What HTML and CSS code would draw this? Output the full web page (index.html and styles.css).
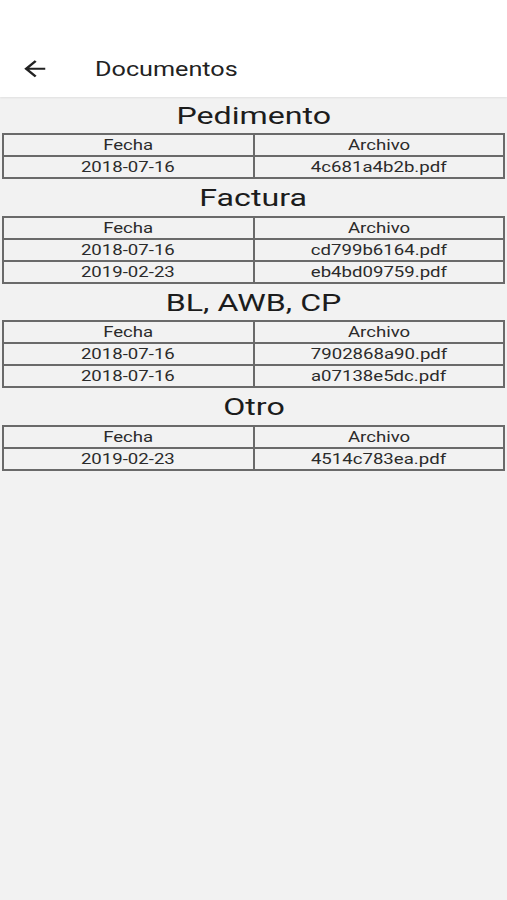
FILE: index.html
```html
<!DOCTYPE html>
<html lang="es">
<head>
  <meta charset="UTF-8">
  <meta name="viewport" content="width=device-width, initial-scale=1.0">
  <title>Documentos</title>
  <link rel="stylesheet" href="styles.css">
</head>
<body>

<header class="appbar">
  <div class="toolbar">
    <svg class="back" viewBox="0 0 24 24" preserveAspectRatio="none" aria-hidden="true">
      <path d="M20 11H7.83l5.59-5.59L12 4l-8 8 8 8 1.41-1.41L7.83 13H20v-2z"/>
    </svg>
    <span class="toolbar-title wide">Documentos</span>
  </div>
</header>

<main class="docs">

  <section class="doc-group">
    <h2 class="group-title"><span class="wide">Pedimento</span></h2>
    <div class="doc-table">
      <div class="cell"><span class="wide">Fecha</span></div>
      <div class="cell"><span class="wide">Archivo</span></div>
      <div class="cell"><span class="wide">2018-07-16</span></div>
      <div class="cell"><span class="wide">4c681a4b2b.pdf</span></div>
    </div>
  </section>

  <section class="doc-group">
    <h2 class="group-title"><span class="wide">Factura</span></h2>
    <div class="doc-table">
      <div class="cell"><span class="wide">Fecha</span></div>
      <div class="cell"><span class="wide">Archivo</span></div>
      <div class="cell"><span class="wide">2018-07-16</span></div>
      <div class="cell"><span class="wide">cd799b6164.pdf</span></div>
      <div class="cell"><span class="wide">2019-02-23</span></div>
      <div class="cell"><span class="wide">eb4bd09759.pdf</span></div>
    </div>
  </section>

  <section class="doc-group">
    <h2 class="group-title"><span class="wide">BL, AWB, CP</span></h2>
    <div class="doc-table">
      <div class="cell"><span class="wide">Fecha</span></div>
      <div class="cell"><span class="wide">Archivo</span></div>
      <div class="cell"><span class="wide">2018-07-16</span></div>
      <div class="cell"><span class="wide">7902868a90.pdf</span></div>
      <div class="cell"><span class="wide">2018-07-16</span></div>
      <div class="cell"><span class="wide">a07138e5dc.pdf</span></div>
    </div>
  </section>

  <section class="doc-group">
    <h2 class="group-title"><span class="wide">Otro</span></h2>
    <div class="doc-table">
      <div class="cell"><span class="wide">Fecha</span></div>
      <div class="cell"><span class="wide">Archivo</span></div>
      <div class="cell"><span class="wide">2019-02-23</span></div>
      <div class="cell"><span class="wide">4514c783ea.pdf</span></div>
    </div>
  </section>

</main>

</body>
</html>
```

FILE: styles.css
```css
:root {
  --bg-color: #f2f2f2;
  --line-color: #6a6a6a;
  --text-color: #222;
  --cell-text: #2b2b2b;
}
* { box-sizing: border-box; }
html, body { height: 100%; }
body {
  font-family: Roboto, "Noto Sans", sans-serif;
  margin: 0;
  padding: 0;
  background-color: var(--bg-color);
  color: var(--text-color);
}

/* the shot is squeezed vertically, so text reads wider than Roboto */
.wide {
  display: inline-block;
  transform: scaleX(1.24);
  transform-origin: center;
}

.appbar {
  background-color: #fff;
  height: 97px;
  padding-top: 40px;
  box-shadow: 0 1px 2px rgba(0,0,0,0.08);
  position: relative;
}
.toolbar {
  height: 57px;
  display: flex;
  align-items: center;
  padding-left: 19px;
}
.back {
  width: 31.5px;
  height: 25.5px;
  fill: #222;
  flex: none;
}
.toolbar-title {
  margin-left: 44px;
  font-size: 21px;
  color: #222;
  transform: scaleX(1.2);
  transform-origin: left center;
}

.docs {
  padding: 0 2px;
}
.group-title {
  margin: 0;
  height: 36px;
  padding-top: 3px;
  line-height: 33px;
  font-size: 24px;
  font-weight: 400;
  text-align: center;
  color: #1c1c1c;
}
.group-title .wide {
  transform: scaleX(1.34);
}
.doc-group + .doc-group .group-title {
  height: 36.5px;
}
.doc-table {
  display: grid;
  grid-template-columns: 1fr 1fr;
  grid-auto-rows: 20px;
  gap: 2px;
  padding: 2px;
  background-color: var(--line-color);
}
.cell {
  background-color: var(--bg-color);
  text-align: center;
  font-size: 15px;
  line-height: 20px;
  color: var(--cell-text);
}
```
